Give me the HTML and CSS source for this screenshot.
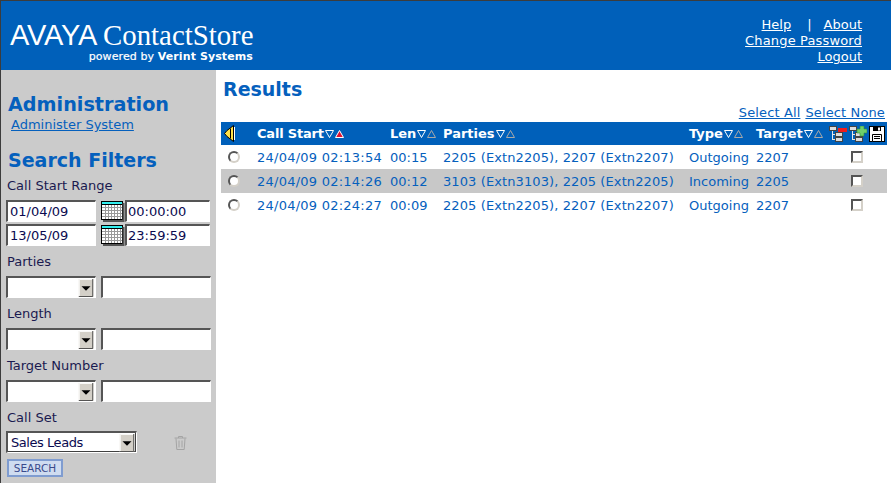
FILE: index.html
```html
<!DOCTYPE html>
<html lang="en">
<head>
<meta charset="utf-8">
<title>AVAYA ContactStore</title>
<link rel="stylesheet" href="styles.css">
</head>
<body>
<svg class="defs" width="0" height="0" aria-hidden="true">
  <symbol id="down" viewBox="0 0 9 8"><path d="M.5.5h8L4.500 7.500z" fill="none" stroke="#fff"/></symbol>
  <symbol id="up" viewBox="0 0 9 8"><path d="M.5 7.500h8L4.500.5z" fill="none" stroke="#a9a9a9"/></symbol>
  <symbol id="upred" viewBox="0 0 9 8"><path d="M.5 7.500h8L4.500.5z" fill="#e0102f" stroke="#fff"/></symbol>
  <symbol id="cal" viewBox="0 0 24 21">
    <rect x=".5" y=".5" width="21" height="18" fill="#fff" stroke="#000"/>
    <rect x="1" y="1" width="20" height="2" fill="#3ee"/>
    <path d="M1 3.500h20" stroke="#000"/>
    <path d="M4.500 4v14M7.500 4v14M10.500 4v14M13.500 4v14M16.500 4v14M19.500 4v14M1 6.500h20M1 9.500h20M1 12.500h20M1 15.500h20" stroke="#999"/>
    <path d="M22.500 2v18H2" fill="none" stroke="#555" stroke-width="2"/>
  </symbol>
  <symbol id="arrow" viewBox="0 0 16 20">
    <rect width="16" height="20" fill="#d4d0c8"/>
    <path d="M.5 19.500v-19h15" fill="none" stroke="#fff"/>
    <path d="M15.500 0v19.500H0" fill="none" stroke="#404040"/>
    <path d="M3 8h10l-5 5z" fill="#000"/>
  </symbol>
  <symbol id="tree" viewBox="0 0 18 16">
    <path d="M3.500 4v10M3.500 8.500h4M3.500 13.500h4" fill="none" stroke="#e8e8e8"/>
    <rect x=".5" y=".5" width="7" height="4" fill="#ddd" stroke="#444"/>
    <rect x="6.500" y="6.500" width="7" height="4" fill="#ddd" stroke="#444"/>
    <rect x="6.500" y="11.500" width="7" height="4" fill="#ddd" stroke="#444"/>
  </symbol>
</svg>

<header class="topbar">
  <div class="brand">
    <div class="brand-main"><span class="avaya">AVAYA</span><span class="product">ContactStore</span></div>
    <div class="brand-sub">powered by <b>Verint Systems</b></div>
  </div>
  <nav class="toplinks">
    <div><a href="#">Help</a><span class="sep">|</span><a href="#">About</a></div>
    <div><a class="spread" href="#">Change Password</a></div>
    <div><a href="#">Logout</a></div>
  </nav>
</header>

<div class="page">
  <aside class="sidebar">
    <h2 class="side-title first">Administration</h2>
    <a class="admin-link" href="#">Administer System</a>
    <h2 class="side-title filters">Search Filters</h2>

    <label class="field-label">Call Start Range</label>
    <div class="range-row">
      <input class="box date" value="01/04/09">
      <svg class="cal"><use href="#cal"/></svg>
      <input class="box time" value="00:00:00">
    </div>
    <div class="range-row">
      <input class="box date" value="13/05/09">
      <svg class="cal"><use href="#cal"/></svg>
      <input class="box time" value="23:59:59">
    </div>

    <label class="field-label spaced">Parties</label>
    <div class="pair-row">
      <div class="box combo"><span></span><svg class="drop"><use href="#arrow"/></svg></div>
      <input class="box wide">
    </div>

    <label class="field-label spaced">Length</label>
    <div class="pair-row">
      <div class="box combo"><span></span><svg class="drop"><use href="#arrow"/></svg></div>
      <input class="box wide">
    </div>

    <label class="field-label spaced">Target Number</label>
    <div class="pair-row">
      <div class="box combo"><span></span><svg class="drop"><use href="#arrow"/></svg></div>
      <input class="box wide">
    </div>

    <label class="field-label spaced callset-label">Call Set</label>
    <div class="callset-row">
      <div class="box combo set"><span>Sales Leads</span><svg class="drop"><use href="#arrow"/></svg></div>
      <svg class="trash" viewBox="0 0 13 15" width="13" height="15">
        <path d="M.5 3h12M4.500 3V1.500h4V3M2 3.500l.8 11h7.400l.8-11M5 5.500v7M8 5.500v7" fill="none" stroke="#a4a4a4"/>
      </svg>
    </div>
    <button class="search-btn" type="button">SEARCH</button>
  </aside>

  <main class="content">
    <h1 class="results-title">Results</h1>
    <div class="select-links"><a href="#">Select All</a><a href="#">Select None</a></div>
    <table class="results">
      <colgroup>
        <col class="c-play"><col class="c-start"><col class="c-len"><col class="c-parties"><col class="c-type"><col class="c-target"><col class="c-actions">
      </colgroup>
      <thead>
        <tr>
          <th>
            <svg class="speaker" viewBox="0 0 12 17" width="12" height="17">
              <path d="M.5 8.500L3 5.500 9.500.5v16L3 11.500z" fill="#ffe14a" stroke="#000"/>
              <path d="M6.500 3.500v10" stroke="#000"/>
              <path d="M10.500 2v13" stroke="#fff"/>
            </svg>
          </th>
          <th><span class="tight">Call Start</span><svg class="sort"><use href="#down"/></svg><svg class="sort"><use href="#upred"/></svg></th>
          <th>Len<svg class="sort"><use href="#down"/></svg><svg class="sort"><use href="#up"/></svg></th>
          <th>Parties<svg class="sort"><use href="#down"/></svg><svg class="sort"><use href="#up"/></svg></th>
          <th>Type<svg class="sort"><use href="#down"/></svg><svg class="sort"><use href="#up"/></svg></th>
          <th>Target<svg class="sort"><use href="#down"/></svg><svg class="sort"><use href="#up"/></svg></th>
          <th>
            <div class="actions">
              <svg viewBox="0 0 18 16" width="18" height="16">
                <use href="#tree"/>
                <rect x="9" y="2" width="9" height="4" fill="#ee1c1c"/>
              </svg>
              <svg viewBox="0 0 18 16" width="18" height="16">
                <use href="#tree"/>
                <path d="M11 0h4v3h3v4h-3v3h-4V7H8V3h3z" fill="#6fcf6a" stroke="#2f8f3a" stroke-width=".6"/>
              </svg>
              <svg viewBox="0 0 16 16" width="16" height="16">
                <rect x=".5" y=".5" width="15" height="15" fill="#fff" stroke="#000"/>
                <path d="M4 1h8v4H4z" fill="#000"/>
                <path d="M9 1.500h2v3H9z" fill="#fff"/>
                <path d="M3.500 8.500h9v7h-9z" fill="#fff" stroke="#000"/>
                <path d="M5 10.500h6M5 12.500h6" stroke="#000"/>
              </svg>
            </div>
          </th>
        </tr>
      </thead>
      <tbody>
        <tr>
          <td><input class="radio" type="radio" name="call"></td>
          <td class="num">24/04/09 02:13:54</td><td>00:15</td><td class="parties">2205 (Extn2205), 2207 (Extn2207)</td><td>Outgoing</td><td>2207</td>
          <td><input class="tick" type="checkbox"></td>
        </tr>
        <tr class="alt">
          <td><input class="radio" type="radio" name="call"></td>
          <td class="num">24/04/09 02:14:26</td><td>00:12</td><td class="parties">3103 (Extn3103), 2205 (Extn2205)</td><td>Incoming</td><td>2205</td>
          <td><input class="tick" type="checkbox"></td>
        </tr>
        <tr>
          <td><input class="radio" type="radio" name="call"></td>
          <td class="num">24/04/09 02:24:27</td><td>00:09</td><td class="parties">2205 (Extn2205), 2207 (Extn2207)</td><td>Outgoing</td><td>2207</td>
          <td><input class="tick" type="checkbox"></td>
        </tr>
      </tbody>
    </table>
  </main>
</div>
</body>
</html>
```

FILE: styles.css
```css
* { box-sizing: border-box; }
html, body { height: 100%; }
body {
  margin: 0;
  height: 483px;
  overflow: hidden;
  display: flex;
  flex-direction: column;
  border-top: 1px solid #3c3c3c;
  border-left: 1px solid #3c3c3c;
  background: #fff;
  font-family: "DejaVu Sans", Verdana, sans-serif;
  font-size: 13px;
  color: #0a246a;
}
.defs { position: absolute; }
a { color: #0560bd; }

.topbar {
  flex: 0 0 69px;
  display: flex;
  justify-content: space-between;
  background: #0060ba;
  color: #fff;
}
.brand { padding: 20px 0 0 9px; width: 252px; }
.brand-main { display: flex; align-items: baseline; height: 29px; }
.avaya {
  font-family: "Liberation Sans", sans-serif;
  font-size: 29px;
  letter-spacing: -.2px;
  line-height: 29px;
  margin-right: 6px;
}
.product {
  font-family: "Liberation Serif", serif;
  font-size: 28.800px;
  line-height: 29px;
}
.brand-sub {
  text-align: right;
  font-size: 11px;
  line-height: 14px;
  letter-spacing: .1px;
  -webkit-text-stroke: .2px #fff;
}
.brand-sub b { font-weight: 700; -webkit-text-stroke: 0; }

.toplinks {
  padding: 16px 29px 0 0;
  text-align: right;
  line-height: 16px;
}
.toplinks a { color: #fff; }
.toplinks .spread { letter-spacing: .15px; }
.sep { margin: 0 12px 0 16px; }

.page { flex: 1; display: flex; min-height: 0; }

.sidebar {
  flex: 0 0 215px;
  background: #cbcbcb;
  padding: 0 0 0 5px;
}
.side-title {
  margin: 0;
  font-size: 19px;
  line-height: 24px;
  font-weight: 700;
  color: #0560bd;
  padding-left: 2px;
}
.side-title.first { margin-top: 23px; font-size: 19.200px; }
.side-title.filters { margin-top: 15px; }
.admin-link { display: block; padding-left: 5px; line-height: 16px; }
.field-label { display: block; line-height: 16px; margin: 6px 0 6px 1px; color: #1a1a50; }
.field-label.spaced { margin-top: 8px; margin-bottom: 6px; }
.field-label.callset-label { margin-bottom: 5px; }

.box {
  height: 22px;
  border-style: solid;
  border-width: 2px 1px 1px 2px;
  border-color: #555 #fff #fff #555;
  background: #fff;
  font: 13px "DejaVu Sans", Verdana, sans-serif;
  color: #0a0a50;
  padding: 0 0 0 2px;
  border-radius: 0;
  outline: 0;
}
.range-row { display: flex; align-items: center; margin-bottom: 2px; height: 22px; }
.date { width: 90px; }
.cal { width: 24px; height: 21px; margin: 0 0 0 5px; }
.time { width: 85px; padding-left: 1px; }
.pair-row { display: flex; gap: 5px; }
.pair-row .combo { width: 90px; }
.wide { width: 110px; }
.combo { display: flex; justify-content: space-between; align-items: center; padding-right: 1px; }
.drop { width: 16px; height: 18px; flex: none; }
.callset-row { display: flex; align-items: center; }
.combo.set { width: 131px; padding-left: 3px; letter-spacing: -.45px; box-shadow: inset -1px -1px 0 #404040; }
.trash { margin-left: 37px; }
.search-btn {
  display: block;
  width: 56px;
  height: 18px;
  margin: 6px 0 0 1px;
  padding: 0;
  border: 2px solid #7f9cd0;
  background: #cfdcf0;
  color: #3a4a8c;
  font: 10.500px "DejaVu Sans", Verdana, sans-serif;
}

.content { flex: 1; padding: 0 4px 0 5px; min-width: 0; }
.results-title {
  margin: 7px 0 0 2px;
  font-size: 19px;
  line-height: 24px;
  color: #0560bd;
}
.select-links { display: flex; justify-content: flex-end; gap: 5px; line-height: 16px; margin: 4px 2px 1px 0; letter-spacing: .13px; }

.results { width: 666px; border-collapse: collapse; table-layout: fixed; }
.c-play { width: 36px; }
.c-start { width: 133px; }
.c-len { width: 53px; }
.c-parties { width: 246px; }
.c-type { width: 67px; }
.c-target { width: 73px; }
.results th {
  height: 23px;
  padding: 0;
  background: #0060ba;
  color: #fff;
  font-size: 13px;
  text-align: left;
  white-space: nowrap;
  vertical-align: middle;
}
.results td {
  height: 24px;
  padding: 0;
  color: #0560bd;
  white-space: nowrap;
  vertical-align: middle;
}
.results .num { letter-spacing: .24px; }
.results .parties { letter-spacing: .1px; }
.tight { letter-spacing: -.2px; }
.alt td { background: #c8c8c8; }
.speaker { display: block; margin-left: 3px; }
.sort { width: 9px; height: 8px; margin-left: 1px; }
.actions { display: flex; gap: 2px; align-items: center; }
.radio, .tick {
  appearance: none;
  display: block;
  width: 12px;
  height: 12px;
  margin: 0;
  border: 2px solid;
  border-color: #555 #d4d0c8 #d4d0c8 #555;
  background: #fff;
}
.radio { border-radius: 50%; margin-left: 7px; }
.tick { margin-left: 22px; }
```
